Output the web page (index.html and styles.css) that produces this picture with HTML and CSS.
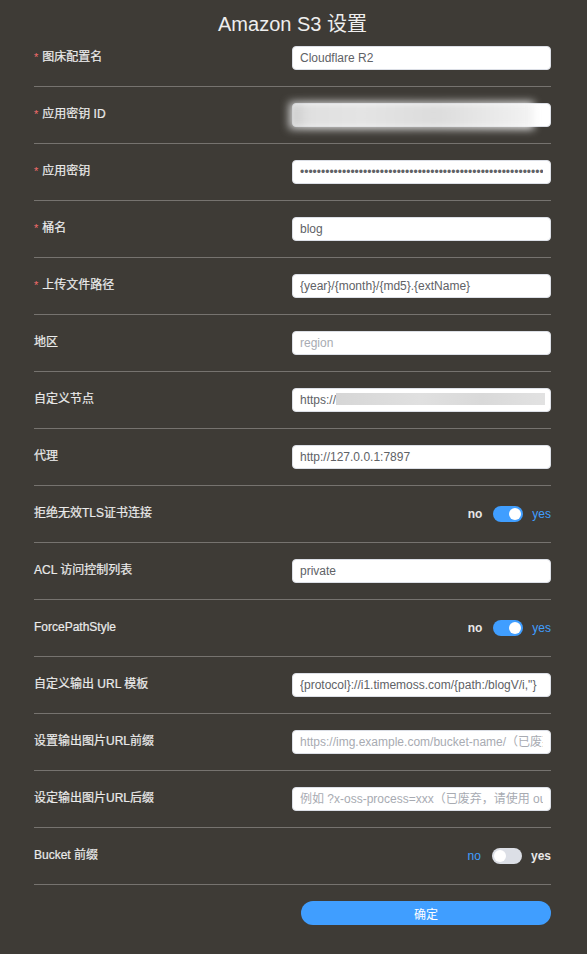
FILE: index.html
```html
<!DOCTYPE html>
<html lang="zh-CN">
<head>
<meta charset="utf-8">
<title>Amazon S3 设置</title>
<link rel="stylesheet" href="styles.css">
</head>
<body>
<div class="page">
  <h1 class="title">Amazon S3 设置</h1>
  <form class="form">
    <div class="row">
      <label class="label"><span class="req">*</span>图床配置名</label>
      <div class="field"><input class="input" type="text" value="Cloudflare R2"></div>
    </div>
    <div class="row">
      <label class="label"><span class="req">*</span>应用密钥 ID</label>
      <div class="field"><input class="input" type="text" value=""><div class="blur-secret"></div></div>
    </div>
    <div class="row">
      <label class="label"><span class="req">*</span>应用密钥</label>
      <div class="field"><input class="input" type="password" value="xxxxxxxxxxxxxxxxxxxxxxxxxxxxxxxxxxxxxxxxxxxxxxxxxxxxxxxxxxxxxxxx"></div>
    </div>
    <div class="row">
      <label class="label"><span class="req">*</span>桶名</label>
      <div class="field"><input class="input" type="text" value="blog"></div>
    </div>
    <div class="row">
      <label class="label"><span class="req">*</span>上传文件路径</label>
      <div class="field"><input class="input" type="text" value="{year}/{month}/{md5}.{extName}"></div>
    </div>
    <div class="row">
      <label class="label">地区</label>
      <div class="field"><input class="input" type="text" placeholder="region"></div>
    </div>
    <div class="row">
      <label class="label">自定义节点</label>
      <div class="field"><input class="input" type="text" value="https://"><div class="blur-host"></div></div>
    </div>
    <div class="row">
      <label class="label">代理</label>
      <div class="field"><input class="input" type="text" value="http://127.0.0.1:7897"></div>
    </div>
    <div class="row">
      <label class="label">拒绝无效TLS证书连接</label>
      <div class="switch-group">
        <span class="sw-text">no</span>
        <span class="switch on"><span class="knob"></span></span>
        <span class="sw-text active">yes</span>
      </div>
    </div>
    <div class="row">
      <label class="label">ACL 访问控制列表</label>
      <div class="field"><input class="input" type="text" value="private"></div>
    </div>
    <div class="row">
      <label class="label">ForcePathStyle</label>
      <div class="switch-group">
        <span class="sw-text">no</span>
        <span class="switch on"><span class="knob"></span></span>
        <span class="sw-text active">yes</span>
      </div>
    </div>
    <div class="row">
      <label class="label">自定义输出 URL 模板</label>
      <div class="field"><input class="input" type="text" value="{protocol}://i1.timemoss.com/{path:/blogV/i,&quot;}"></div>
    </div>
    <div class="row">
      <label class="label">设置输出图片URL前缀</label>
      <div class="field"><input class="input" type="text" placeholder="https://img.example.com/bucket-name/（已废弃，请使用 outputURLPattern）"></div>
    </div>
    <div class="row">
      <label class="label">设定输出图片URL后缀</label>
      <div class="field"><input class="input" type="text" placeholder="例如 ?x-oss-process=xxx（已废弃，请使用 outputURLPattern）"></div>
    </div>
    <div class="row">
      <label class="label">Bucket 前缀</label>
      <div class="switch-group">
        <span class="sw-text active">no</span>
        <span class="switch"><span class="knob"></span></span>
        <span class="sw-text">yes</span>
      </div>
    </div>
    <div class="actions">
      <button type="button" class="btn">确定</button>
    </div>
  </form>
</div>
</body>
</html>
```
FILE: styles.css
```css
html, body {
  margin: 0;
  padding: 0;
  background: #3e3b36;
}
body {
  font-family: "Liberation Sans", Arial, "Noto Sans CJK SC", sans-serif;
  color: #e8e8e8;
  font-size: 12px;
}
.page {
  width: 587px;
  height: 954px;
  box-sizing: border-box;
  padding: 0 36px 0 34px;
}
.title {
  margin: 0;
  padding-top: 12px;
  font-size: 20px;
  line-height: 24px;
  font-weight: normal;
  text-align: center;
  color: #eeeeee;
}
.form {
  display: flex;
  flex-direction: column;
}
.row {
  display: flex;
  justify-content: space-between;
  align-items: center;
  padding: 16px 0;
  height: 24px;
  border-bottom: 1px solid #76736f;
}
.row:first-child {
  padding-top: 10px;
}
.label {
  font-size: 12px;
  line-height: 14px;
  padding-bottom: 3px;
  color: #ebebeb;
  display: flex;
  align-items: center;
  -webkit-text-stroke: 0.2px #ebebeb;
}
.req {
  color: #f56c6c;
  margin-right: 4px;
  font-size: 11px;
  -webkit-text-stroke: 0;
}
.field {
  position: relative;
  width: 259px;
  height: 24px;
}
.input {
  box-sizing: border-box;
  width: 100%;
  height: 24px;
  margin: 0;
  padding: 0 7px;
  border: 1px solid #dcdfe6;
  border-radius: 4px;
  background: #ffffff;
  color: #606266;
  font-family: "Liberation Sans", Arial, "Noto Sans CJK SC", sans-serif;
  font-size: 12px;
  outline: none;
}
.input::placeholder {
  color: #a8abb2;
}
.blur-secret {
  position: absolute;
  left: -3px;
  top: -1px;
  width: 245px;
  height: 27px;
  background: linear-gradient(90deg, #c8c8c8 0%, #e0e0e0 8%, #e4e4e4 30%, #dcdcdc 60%, #ededed 90%, #f4f4f4 100%);
  filter: blur(4px);
}
.blur-host {
  position: absolute;
  left: 44px;
  top: 5px;
  width: 209px;
  height: 12px;
  background: linear-gradient(90deg, #d6d6d6, #e0e0e0 40%, #d9d9d9 70%, #e2e2e2);
  filter: blur(0.6px);
}
.switch-group {
  display: flex;
  align-items: center;
  height: 24px;
}
.sw-text {
  font-size: 12px;
  color: #e8e8e8;
  font-weight: bold;
}
.sw-text.active {
  color: #409eff;
  font-weight: normal;
}
.switch {
  position: relative;
  width: 30px;
  height: 16px;
  border-radius: 8px;
  background: #dcdfe6;
  margin: 0 9px 0 11px;
}
.switch.on {
  background: #409eff;
}
.knob {
  position: absolute;
  top: 2px;
  left: 2px;
  width: 12px;
  height: 12px;
  border-radius: 50%;
  background: #ffffff;
}
.switch.on .knob {
  left: 16px;
}
.actions {
  display: flex;
  justify-content: flex-end;
  margin-top: 16px;
}
.btn {
  width: 250px;
  height: 24px;
  border: none;
  border-radius: 12px;
  background: #409eff;
  color: #ffffff;
  font-family: "Liberation Sans", Arial, "Noto Sans CJK SC", sans-serif;
  font-size: 12px;
  padding: 0;
}
```
